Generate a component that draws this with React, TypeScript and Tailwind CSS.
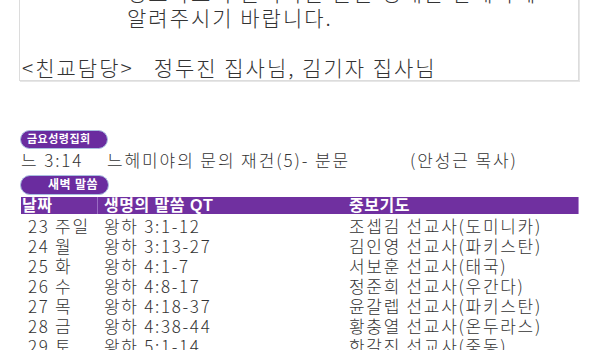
import React from "react";

const rows = [
  ["23 주일", "왕하 3:1-12", "조셉김 선교사(도미니카)"],
  ["24 월", "왕하 3:13-27", "김인영 선교사(파키스탄)"],
  ["25 화", "왕하 4:1-7", "서보훈 선교사(태국)"],
  ["26 수", "왕하 4:8-17", "정준희 선교사(우간다)"],
  ["27 목", "왕하 4:18-37", "윤갈렙 선교사(파키스탄)"],
  ["28 금", "왕하 4:38-44", "황충열 선교사(온두라스)"],
  ["29 토", "왕하 5:1-14", "한갈진 선교사(중동)"],
];

const font = { fontFamily: '"Liberation Sans", "Noto Sans CJK KR", sans-serif' };
const light = { fontFamily: '"Noto Sans CJK KR", "Liberation Sans", sans-serif' };

export default function App() {
  return (
    <div className="w-[600px] h-[350px] overflow-hidden bg-white text-[#333]" style={font}>
      <div className="ml-[19px] w-[560px] mt-[-21px] border border-[#dcdcdc] shadow-[1px_1px_0_#e6e6e6] text-[21px] leading-[25px] font-light tracking-[2px]" style={light}>
        <div className="pl-[107px] whitespace-nowrap">경조사로의 문의하는 분은 정해준 관계자께</div>
        <div className="pl-[107px] whitespace-nowrap">알려주시기 바랍니다.</div>
        <div className="h-[25px]"></div>
        <div className="pl-[2px] whitespace-nowrap">&lt;친교담당&gt;&nbsp;&nbsp;&nbsp;정두진 집사님, 김기자 집사님</div>
      </div>

      <div className="ml-[20px] mt-[49px] w-[88px] h-[19px] rounded-full bg-[#6a2c9f] border border-[#a9bfe0] flex items-center pl-[6px] text-white text-[11px] font-bold leading-none tracking-[0.5px]">
        금요성령집회
      </div>
      <div className="flex items-center h-[22px] text-[17px] font-light tracking-[1.9px] whitespace-nowrap ml-[21px]" style={light}>
        <span className="w-[86px]">느 3:14</span>
        <span className="w-[303px]">느헤미야의 문의 재건(5)- 분문</span>
        <span>(안성근 목사)</span>
      </div>
      <div className="ml-[20px] mt-[4px] w-[89px] h-[20px] rounded-full bg-[#6a2c9f] border border-[#a9bfe0] flex items-center pl-[27px] text-white text-[12px] font-bold leading-none tracking-[0.5px]">
        새벽 말씀
      </div>

      <div className="ml-[21px] w-[558px] mt-[2px]">
        <div className="grid grid-cols-[77px_251px_230px] h-[17px] bg-[#7030a0] text-white font-bold text-[16px] leading-[17px] tracking-[0.5px] border-r border-[#b08ad0]">
          <div className="pl-[1px] border-r border-[#9a6cc4]">날짜</div>
          <div className="pl-[6px]">생명의 말씀 QT</div>
          <div>중보기도</div>
        </div>
        <div className="pt-[2px]" style={light}>
          {rows.map((r) => (
            <div key={r[0]} className="grid grid-cols-[77px_251px_230px] h-[20px] text-[17px] leading-[20px] font-light tracking-[1.7px] whitespace-nowrap">
              <div className="pl-[7px]">{r[0]}</div>
              <div className="pl-[6px]">{r[1]}</div>
              <div>{r[2]}</div>
            </div>
          ))}
        </div>
      </div>
    </div>
  );
}
